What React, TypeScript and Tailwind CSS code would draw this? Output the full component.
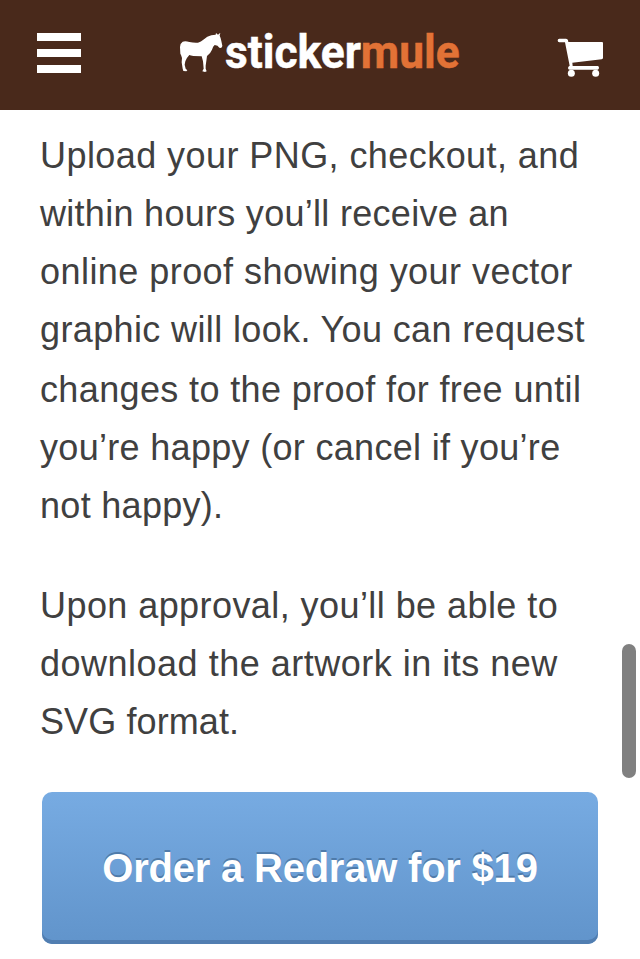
const intro = [
  { text: "Upload your PNG, checkout, and", look: "h-[58px] tracking-[0.43px]" },
  { text: "within hours you’ll receive an", look: "h-[58px] tracking-[0.29px]" },
  { text: "online proof showing your vector", look: "h-[58px] tracking-[0.45px]" },
  { text: "graphic will look. You can request", look: "h-[60px] tracking-[0.37px]" },
  { text: "changes to the proof for free until", look: "h-[58px] tracking-[0.37px]" },
  { text: "you’re happy (or cancel if you’re", look: "h-[58px] tracking-[0.31px]" },
  { text: "not happy).", look: "h-[58px] tracking-[0.3px]" },
];

const approval = [
  { text: "Upon approval, you’ll be able to", look: "h-[58px] tracking-[0.43px]" },
  { text: "download the artwork in its new", look: "h-[58px] tracking-[0.5px]" },
  { text: "SVG format.", look: "h-[58px] tracking-[0.1px]" },
];

function Mule() {
  return (
    <svg className="h-[44px] w-[46px] shrink-0" viewBox="27 18 138 132" fill="#fff" aria-hidden="true">
      <path d="M137 29 L138 24 L144 29 L151 23 L149 32 Q153 40 154 48 L157 62 Q157 68 152 69 L148 68 Q144 61 134 60 Q129 64 126 74 Q121 86 111 93 L109 108 L107 122 L107 131 L110 139 L105 141 L97 139 L101 131 L99 109 L95 94 Q80 93 70 93 Q62 92 58 90 Q50 98 46 109 L44 119 L47 131 L52 136 L49 139 L40 138 L38 131 L35 112 L36 99 L33 90 L31 86 L30 66 Q31 54 38 50 Q46 47 58 51 Q72 54 84 53 Q93 50 100 44 Q112 34 124 31 Z" />
    </svg>
  );
}

function Cart() {
  return (
    <svg className="h-[40px] w-[48px]" viewBox="36 36 144 120" fill="#fff" aria-hidden="true">
      <path d="M43 41 H63 Q68 41 69 46 L70 51 H171 Q174 51 174 54 V99 Q174 102 170 103 L82 113 L83 123 H158 Q162 123 162 128.500 Q162 134 158 134 H74 Q69 134 69 129 Q69 125 74 122 L60 52 H43 Q38 52 38 46.500 Q38 41 43 41 Z" />
      <circle cx="79" cy="145" r="10.500" />
      <circle cx="152" cy="145" r="10.500" />
    </svg>
  );
}

function Paragraph({ lines }: { lines: { text: string; look: string }[] }) {
  return (
    <p className="text-[36px] leading-[58px] text-[#404040]">
      {lines.map((line) => (
        <span key={line.text} className={`block whitespace-nowrap ${line.look}`}>
          {line.text}
        </span>
      ))}
    </p>
  );
}

export default function App() {
  return (
    <div className="relative h-[959px] w-[640px] overflow-hidden bg-white font-['Liberation_Sans',Arial,sans-serif]">
      <header className="flex h-[110px] items-start bg-[#49291b] pl-[37px]">
        <button aria-label="Menu" className="mt-[33px] flex w-[44px] flex-col gap-2">
          <span className="h-2 w-full bg-white" />
          <span className="h-2 w-full bg-white" />
          <span className="h-2 w-full bg-white" />
        </button>
        <div className="mt-[31px] ml-[98px] flex h-[44px] w-[284px]">
          <Mule />
          <span className="block origin-left scale-x-[0.942] font-['Roboto',sans-serif] text-[47px] leading-[42px] font-bold whitespace-nowrap text-white [-webkit-text-stroke:0.5px]">
            sticker<span className="text-[#e27236]">mule</span>
          </span>
        </div>
        <button aria-label="Cart" className="mt-[37px] ml-[94px]">
          <Cart />
        </button>
      </header>
      <main className="px-10 pt-[17px]">
        <Paragraph lines={intro} />
        <div className="mt-[42px]">
          <Paragraph lines={approval} />
        </div>
        <button className="mt-[41px] ml-[2px] flex h-[152px] w-[556px] items-center justify-center rounded-[10px] bg-linear-to-b from-[#77abe2] to-[#6194cb] text-[40px] font-bold tracking-[-0.22px] whitespace-nowrap text-white shadow-[inset_0_-4px_0_#517eb1] [text-shadow:0_-2px_0_#4f7baa]">
          Order a Redraw for $19
        </button>
      </main>
      <div className="absolute top-[644px] left-[622px] h-[134px] w-[14px] rounded-full bg-[#808080]" />
    </div>
  );
}
